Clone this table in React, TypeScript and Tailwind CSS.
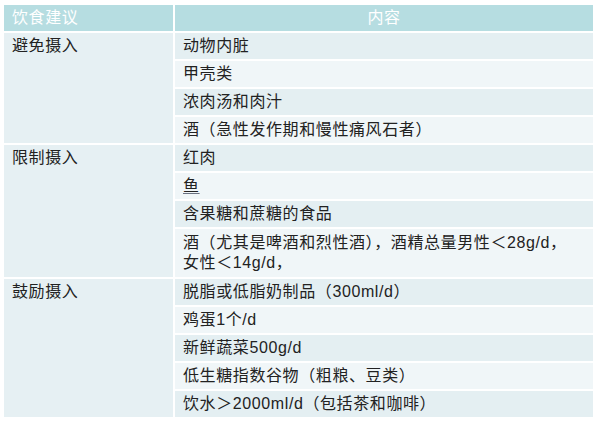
import React from "react";

type Group = { label: string; items: React.ReactNode[] };

const groups: Group[] = [
  {
    label: "避免摄入",
    items: ["动物内脏", "甲壳类", "浓肉汤和肉汁", "酒（急性发作期和慢性痛风石者）"],
  },
  {
    label: "限制摄入",
    items: [
      "红肉",
      <span className="underline decoration-gray-500 underline-offset-2">鱼</span>,
      "含果糖和蔗糖的食品",
      <>
        酒（尤其是啤酒和烈性酒），酒精总量男性＜28g/d，
        <br />
        女性＜14g/d，
      </>,
    ],
  },
  {
    label: "鼓励摄入",
    items: [
      "脱脂或低脂奶制品（300ml/d）",
      "鸡蛋1个/d",
      "新鲜蔬菜500g/d",
      "低生糖指数谷物（粗粮、豆类）",
      "饮水＞2000ml/d（包括茶和咖啡）",
    ],
  },
];

export default function App() {
  let idx = 0;
  return (
    <div
      className="w-[600px] h-[426px] bg-white pt-[5px] pl-[4px] text-[16px] text-[#222] tracking-[0.6px]"
      style={{ fontFamily: '"Liberation Sans", "Noto Sans CJK SC", sans-serif' }}
    >
      <div className="w-[589px] grid grid-cols-[169px_418px] gap-[2px] bg-white">
        <div className="h-[26px] bg-[#b6dde1] text-white flex items-center px-2">饮食建议</div>
        <div className="h-[26px] bg-[#b6dde1] text-white flex items-center justify-center">内容</div>
        {groups.map((g) => {
          const rows = g.items.map((item, i) => {
            const dark = idx % 2 === 0;
            idx++;
            const multi = g.label === "限制摄入" && i === 3;
            return (
              <div
                key={g.label + i}
                className={`col-start-2 px-2 ${dark ? "bg-[#e4eff2]" : "bg-[#f0f6f8]"} ${
                  multi ? "py-[4px] leading-[20px] h-[48px]" : "h-[26px] flex items-center"
                }`}
              >
                {item}
              </div>
            );
          });
          return (
            <React.Fragment key={g.label}>
              <div
                className={`col-start-1 bg-[#e6f0f3] px-2 h-full ${
                  g.items.length === 5 ? "row-span-5" : "row-span-4"
                }`}
              >
                <div className="h-[26px] flex items-center">{g.label}</div>
              </div>
              {rows}
            </React.Fragment>
          );
        })}
      </div>
    </div>
  );
}
